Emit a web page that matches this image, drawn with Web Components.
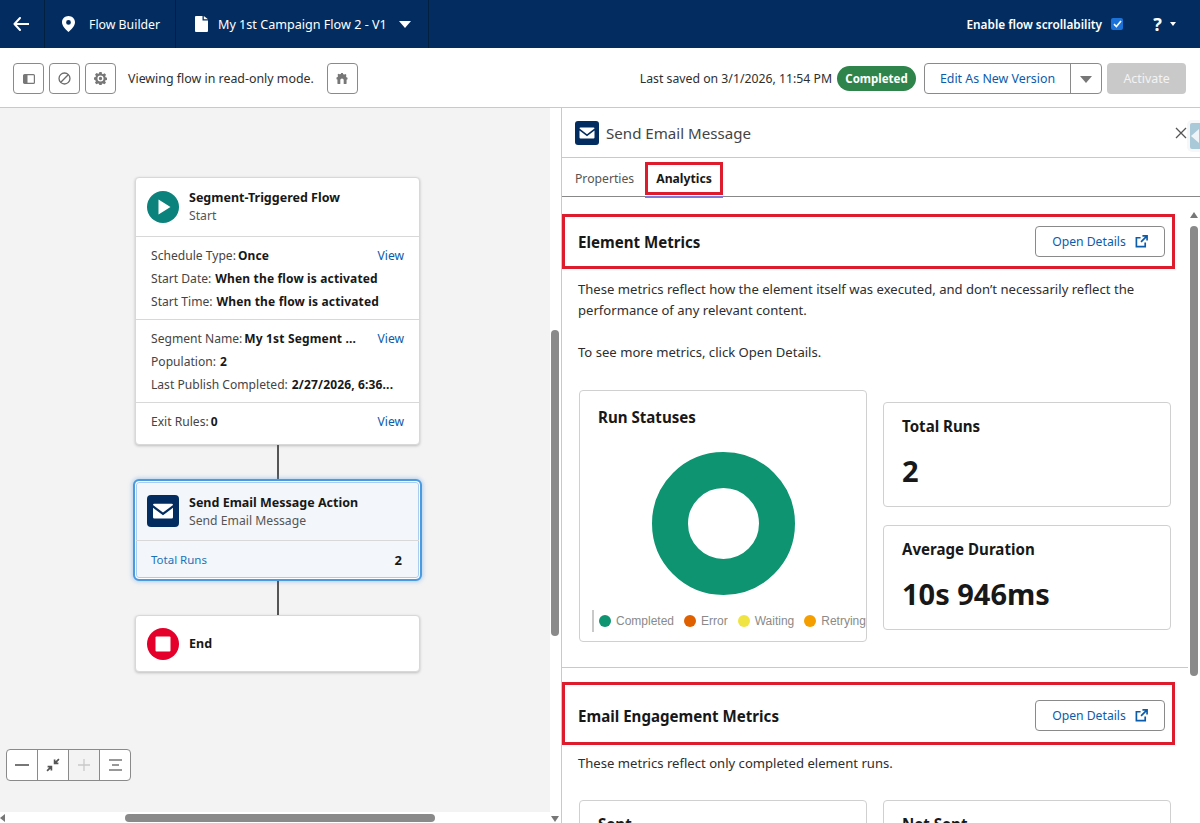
<!DOCTYPE html>
<html lang="en">
<head>
<meta charset="utf-8">
<title>Flow Builder</title>
<style>
  html, body { margin: 0; height: 100%; overflow: hidden; background: #fff; }
  body { font-family: "Noto Sans", "Open Sans", sans-serif; font-size: 13px; color: #181818; }
  #app { display: flex; flex-direction: column; width: 1200px; height: 823px; overflow: hidden; }
</style>
</head>
<body>
<div id="app">
  <flow-topbar></flow-topbar>
  <flow-toolbar></flow-toolbar>
  <flow-main>
    <flow-canvas slot="left">
      <flow-node kind="start" title="Segment-Triggered Flow" subtitle="Start">
        <node-section>
          <node-row label="Schedule Type:" value="Once" link="View" tight></node-row>
          <node-row label="Start Date:" value="When the flow is activated"></node-row>
          <node-row label="Start Time:" value="When the flow is activated"></node-row>
        </node-section>
        <node-section>
          <node-row label="Segment Name:" value="My 1st Segment ..." link="View" tight></node-row>
          <node-row label="Population:" value="2"></node-row>
          <node-row label="Last Publish Completed:" value="2/27/2026, 6:36..."></node-row>
        </node-section>
        <node-section>
          <node-row label="Exit Rules:" value="0" link="View" tight></node-row>
        </node-section>
      </flow-node>
      <flow-connector height="34"></flow-connector>
      <flow-node kind="email" title="Send Email Message Action" subtitle="Send Email Message" selected>
        <node-total label="Total Runs" value="2"></node-total>
      </flow-node>
      <flow-connector height="34"></flow-connector>
      <flow-node kind="end" title="End"></flow-node>
    </flow-canvas>
    <side-panel slot="right" title="Send Email Message">
      <section-head title="Element Metrics" height="55"></section-head>
      <p style="margin:10px 36px 0 16px;line-height:21px;font-size:13.1px;color:#2e2e2e">These metrics reflect how the element itself was executed, and don’t necessarily reflect the performance of any relevant content.<br><br>To see more metrics, click Open Details.</p>
      <metric-grid style="margin-top:27px">
        <status-card></status-card>
        <div style="display:flex;flex-direction:column;gap:18px;padding-top:12px">
          <metric-card title="Total Runs" value="2"></metric-card>
          <metric-card title="Average Duration" value="10s 946ms"></metric-card>
        </div>
      </metric-grid>
      <div style="height:1px;background:#c9c9c9;margin:25px 12px 0 0"></div>
      <div style="height:14px"></div>
      <section-head title="Email Engagement Metrics" height="63" shift="4"></section-head>
      <p style="margin:8px 36px 0 16px;line-height:21px;font-size:13.1px;color:#2e2e2e">These metrics reflect only completed element runs.</p>
      <metric-grid style="margin-top:26px">
        <metric-card title="Sent"></metric-card>
        <metric-card title="Net Sent"></metric-card>
      </metric-grid>
    </side-panel>
  </flow-main>
</div>

<script>
const FONT = '"Noto Sans", "Open Sans", sans-serif';

const ICONS = {
  back: '<svg width="16" height="14" viewBox="0 0 16 14"><path d="M7 1 1.500 7 7 13M2 7h13.500" fill="none" stroke="#fff" stroke-width="2" stroke-linecap="round" stroke-linejoin="round"/></svg>',
  pin: '<svg width="13" height="16" viewBox="0 0 13 16"><path fill-rule="evenodd" fill="#fff" d="M6.500 0C2.900 0 0 2.800 0 6.300 0 10.400 4.600 14.300 6.500 16 8.400 14.300 13 10.400 13 6.300 13 2.800 10.100 0 6.500 0Zm0 4a2.400 2.400 0 1 1 0 4.800 2.400 2.400 0 0 1 0-4.800Z"/></svg>',
  file: '<svg width="13" height="16" viewBox="0 0 13 16"><path fill="#fff" d="M1 0h6.500v4.500H13V15a1 1 0 0 1-1 1H1a1 1 0 0 1-1-1V1a1 1 0 0 1 1-1Zm7.800 0L13 3.300H8.800Z"/></svg>',
  panel: '<svg width="12" height="10" viewBox="0 0 12 10"><rect x=".6" y=".6" width="10.800" height="8.800" rx="1" fill="none" stroke="#777" stroke-width="1.200"/><rect x="1" y="1" width="3.500" height="8" fill="#777"/></svg>',
  block: '<svg width="13" height="13" viewBox="0 0 14 14"><circle cx="7" cy="7" r="5.900" fill="none" stroke="#6b6b6b" stroke-width="1.400"/><path d="M3 11 11 3" stroke="#6b6b6b" stroke-width="1.400"/></svg>',
  gear: '<svg width="13" height="13" viewBox="0 0 14 14"><path fill="#777" fill-rule="evenodd" d="M5.800 0h2.400l.4 1.800 1.100.5 1.600-1 1.700 1.700-1 1.600.5 1.100 1.500.4v2.400l-1.700.4-.4 1.100 1 1.600-1.700 1.700-1.600-1-1.100.4-.3 1.800H5.800l-.4-1.800-1.100-.4-1.600 1L1 11.700l1-1.600-.5-1.100L0 8.200V5.800l1.700-.4.400-1.100-1-1.600L2.800 1l1.600 1 1-.5ZM7 3.700a3.300 3.300 0 1 0 0 6.600 3.300 3.300 0 0 0 0-6.600Zm0 1.500a1.800 1.800 0 1 1 0 3.600 1.800 1.800 0 0 1 0-3.600Z"/></svg>',
  robot: '<svg width="12" height="11" viewBox="0 0 14 13"><path fill="#777" fill-rule="evenodd" d="M6 0h2l.4 1.400 1.500.4 1.200-.7 1.200 1.300-.6 1.200.5 1.400 1.300.5v2l-1.100.4V12a1 1 0 0 1-1 1H2.600a1 1 0 0 1-1-1V7.700L.5 7.300v-2l1.300-.5.500-1.400-.6-1.200 1.200-1.300 1.200.7 1.500-.4ZM5 8.400V13h4V8.400a2 2 0 0 0-4 0Z"/></svg>',
  external: '<svg width="13" height="13" viewBox="0 0 14 14"><path d="M6 3H1.500v9.500H11V8M8 1h5v5M13 1 6.500 7.500" fill="none" stroke="#0b5cab" stroke-width="1.800"/></svg>',
  mail: '<svg viewBox="0 0 24 24" width="100%" height="100%"><rect width="24" height="24" rx="3" fill="#032d60"/><path fill="#fff" d="M4.500 7.500a1 1 0 0 1 1-1h13a1 1 0 0 1 1 1L12 13.200Zm0 2.100 7.500 5.600 7.500-5.600v7a1 1 0 0 1-1 1h-13a1 1 0 0 1-1-1Z"/></svg>',
  start: '<svg viewBox="0 0 32 32" width="32" height="32"><circle cx="16" cy="16" r="16" fill="#0b827c"/><path d="M11.500 8.500 23.500 16l-12 7.500Z" fill="#fff"/></svg>',
  end: '<svg viewBox="0 0 32 32" width="32" height="32"><circle cx="16" cy="16" r="16" fill="#e4002b"/><rect x="8.500" y="8.500" width="15" height="15" rx="1" fill="#fff"/></svg>'
};

class FlowTopbar extends HTMLElement {
  constructor() {
    super();
    const shadow = this.attachShadow({ mode: 'open' });
    shadow.innerHTML = `
<style>
  :host { display: flex; align-items: stretch; height: 48px; flex: none; background: #032d60; color: #fff; font-family: ${FONT}; font-size: 12.3px; }
  .cell { display: flex; align-items: center; border-right: 1px solid #01203f; }
  .back { width: 45px; padding-left: 13px; box-sizing: border-box; }
  .app { width: 131px; padding-left: 17px; box-sizing: border-box; gap: 14px; }
  .doc { width: 253px; padding-left: 19px; box-sizing: border-box; gap: 10px; font-size: 12.6px; }
  .caret { width: 0; height: 0; border: 6px solid transparent; border-top: 7px solid #fff; border-bottom: 0; margin-left: 2px; }
  .right { margin-left: auto; display: flex; align-items: center; }
  .label { font-weight: 600; font-size: 11.8px; }
  .check { width: 12px; height: 12px; background: #1b72d8; border-radius: 2px; margin-left: 9px; display: flex; align-items: center; justify-content: center; }
  .help { font-size: 18px; font-weight: 700; margin-left: 29px; width: 11px; text-align: center; }
  .mini { width: 0; height: 0; border: 3px solid transparent; border-top: 4px solid #fff; border-bottom: 0; margin: 0 24px 0 7px; }
</style>
<div class="cell back">${ICONS.back}</div>
<div class="cell app">${ICONS.pin}<span>Flow Builder</span></div>
<div class="cell doc">${ICONS.file}<span>My 1st Campaign Flow 2 - V1</span><span class="caret"></span></div>
<div class="right">
  <span class="label">Enable flow scrollability</span>
  <span class="check"><svg width="9" height="8" viewBox="0 0 9 8"><path d="M1 4.200 3.400 6.500 8 1" fill="none" stroke="#fff" stroke-width="1.600"/></svg></span>
  <span class="help">?</span><span class="mini"></span>
</div>`;
  }
}
customElements.define('flow-topbar', FlowTopbar);

class IconButton extends HTMLElement {
  constructor() {
    super();
    const shadow = this.attachShadow({ mode: 'open' });
    shadow.innerHTML = `
<style>
  :host { display: flex; align-items: center; justify-content: center; width: 31px; height: 31px; box-sizing: border-box; border: 1px solid #8a8a8a; border-radius: 4px; background: #fff; flex: none; }
</style>
<slot></slot>`;
  }
}
customElements.define('icon-button', IconButton);

class FlowToolbar extends HTMLElement {
  constructor() {
    super();
    const shadow = this.attachShadow({ mode: 'open' });
    shadow.innerHTML = `
<style>
  :host { display: flex; align-items: center; height: 60px; flex: none; box-sizing: border-box; border-bottom: 1px solid #c9c9c9; padding: 2px 14px 0 13px; background: #fff; font-family: ${FONT}; font-size: 12.4px; color: #2e2e2e; }
  .tools { display: flex; gap: 5px; }
  .msg { margin: 0 13px 0 12px; }
  .right { margin-left: auto; display: flex; align-items: center; }
  .saved { font-size: 12.25px; }
  .badge { margin: 0 8px 0 5px; height: 25px; width: 79px; border-radius: 13px; background: #2e844a; color: #fff; font-weight: 700; font-size: 11.5px; display: flex; align-items: center; justify-content: center; }
  .split { display: flex; height: 31px; box-sizing: border-box; border: 1px solid #8a8a8a; border-radius: 4px; width: 178px; color: #0b5cab; }
  .split .main { width: 145px; display: flex; align-items: center; justify-content: center; border-right: 1px solid #8a8a8a; }
  .split .more { flex: 1; display: flex; align-items: center; justify-content: center; }
  .split .more i { width: 0; height: 0; border: 6px solid transparent; border-top: 7px solid #777; border-bottom: 0; margin-top: 2px; }
  .activate { margin-left: 5px; width: 79px; height: 31px; border-radius: 4px; background: #c9c9c9; color: #f3f3f3; display: flex; align-items: center; justify-content: center; }
</style>
<div class="tools">
  <icon-button>${ICONS.panel}</icon-button>
  <icon-button>${ICONS.block}</icon-button>
  <icon-button>${ICONS.gear}</icon-button>
</div>
<span class="msg">Viewing flow in read-only mode.</span>
<icon-button>${ICONS.robot}</icon-button>
<div class="right">
  <span class="saved">Last saved on 3/1/2026, 11:54 PM</span>
  <span class="badge">Completed</span>
  <div class="split"><span class="main">Edit As New Version</span><span class="more"><i></i></span></div>
  <span class="activate">Activate</span>
</div>`;
  }
}
customElements.define('flow-toolbar', FlowToolbar);

class FlowMain extends HTMLElement {
  constructor() {
    super();
    const shadow = this.attachShadow({ mode: 'open' });
    shadow.innerHTML = `
<style>
  :host { display: flex; flex: 1; min-height: 0; }
  ::slotted([slot="left"]) { width: 561px; flex: none; }
  ::slotted([slot="right"]) { flex: 1; min-width: 0; }
</style>
<slot name="left"></slot><slot name="right"></slot>`;
  }
}
customElements.define('flow-main', FlowMain);

class FlowCanvas extends HTMLElement {
  constructor() {
    super();
    const shadow = this.attachShadow({ mode: 'open' });
    shadow.innerHTML = `
<style>
  :host { display: block; position: relative; background: #fff; overflow: hidden; font-family: ${FONT}; }
  .stage { position: absolute; inset: 0 11px 11px 0; background: #f3f3f3; box-sizing: border-box; padding: 69px 0 0 135px; }
  .flow { width: 285px; display: flex; flex-direction: column; align-items: center; }
  .zoom { position: absolute; left: 6px; top: 641px; display: flex; width: 125px; height: 32px; box-sizing: border-box; border: 1px solid #8a8a8a; border-radius: 4px; background: #fff; overflow: hidden; }
  .zoom span { flex: 1; display: flex; align-items: center; justify-content: center; border-right: 1px solid #8a8a8a; }
  .zoom span:last-child { border-right: 0; }
  .zoom span.off { background: #f3f3f3; }
  .thumb { position: absolute; background: #8a8a8a; border-radius: 4px; }
  .v { left: 551px; top: 222px; width: 8px; height: 306px; }
  .h { left: 125px; top: 706px; width: 310px; height: 8px; }
  .arrow { position: absolute; width: 0; height: 0; border: 4px solid transparent; }
  .a-left { left: 0; top: 706px; border-right: 5px solid #777; border-left: 0; }
  .a-down { left: 551px; top: 708px; border-top: 6px solid #777; border-bottom: 0; }
</style>
<div class="stage"><div class="flow"><slot></slot></div></div>
<div class="zoom">
  <span><svg width="14" height="2"><rect width="14" height="2" fill="#777"/></svg></span>
  <span><svg width="14" height="14" viewBox="0 0 13 13"><path d="M12 1 8 5M8 1.500V5h3.500M1 12l4-4M5 11.500V8H1.500" fill="none" stroke="#555" stroke-width="1.600"/></svg></span>
  <span class="off"><svg width="12" height="12" viewBox="0 0 12 12"><path d="M6 0v12M0 6h12" stroke="#c9c9c9" stroke-width="1.300"/></svg></span>
  <span><svg width="13" height="12" viewBox="0 0 13 12"><path d="M0 1h13M3 6h7M0 11h13" stroke="#777" stroke-width="1.500"/></svg></span>
</div>
<div class="thumb v"></div>
<div class="thumb h"></div>
<div class="arrow a-left"></div>
<div class="arrow a-down"></div>`;
  }
}
customElements.define('flow-canvas', FlowCanvas);

class FlowConnector extends HTMLElement {
  constructor() {
    super();
    const shadow = this.attachShadow({ mode: 'open' });
    shadow.innerHTML = `<style>:host { display: block; width: 2px; background: #555; flex: none; }</style>`;
  }
  connectedCallback() {
    this.style.height = this.getAttribute('height') + 'px';
  }
}
customElements.define('flow-connector', FlowConnector);

class FlowNode extends HTMLElement {
  constructor() {
    super();
    const shadow = this.attachShadow({ mode: 'open' });
    const kind = this.getAttribute('kind');
    const sub = this.getAttribute('subtitle');
    const icon = kind === 'email' ? `<span class="mail">${ICONS.mail}</span>` : ICONS[kind];
    shadow.innerHTML = `
<style>
  :host { display: block; width: 285px; box-sizing: border-box; background: #fff; border: 1px solid #d8d8d8; border-radius: 4px; box-shadow: 0 1px 3px rgba(0,0,0,.22); color: #181818; font-family: ${FONT}; flex: none; }
  :host([selected]) { background: #f3f6fb; margin: 2px 0; outline: 2px solid #4a9ae0; outline-offset: 0; box-shadow: 0 0 4px 3px rgba(80,150,220,.4), inset 0 0 0 1px #a8cdee; border-color: #fff; }
  :host([selected]) .text { padding-top: 2px; }
  .head { display: flex; align-items: center; gap: 10px; height: 58px; padding-left: 11px; }
  :host([kind="end"]) .head { height: 55px; }
  .mail { width: 32px; height: 32px; display: block; }
  svg { display: block; flex: none; }
  .title { font-size: 12.5px; font-weight: 700; line-height: 18px; }
  .sub { font-size: 12.2px; line-height: 18px; color: #555; }
</style>
<div class="head">${icon}<div class="text"><div class="title">${this.getAttribute('title')}</div>${sub ? `<div class="sub">${sub}</div>` : ''}</div></div>
<slot></slot>`;
  }
}
customElements.define('flow-node', FlowNode);

class NodeSection extends HTMLElement {
  constructor() {
    super();
    const shadow = this.attachShadow({ mode: 'open' });
    shadow.innerHTML = `
<style>
  :host { display: flex; flex-direction: column; gap: 5px; padding: 10px 15px 8px; border-top: 1px solid #d8d8d8; }
  :host(:last-child) { padding-bottom: 13px; }
</style>
<slot></slot>`;
  }
}
customElements.define('node-section', NodeSection);

class NodeRow extends HTMLElement {
  constructor() {
    super();
    const shadow = this.attachShadow({ mode: 'open' });
    const link = this.getAttribute('link');
    const gap = this.hasAttribute('tight') ? '2px' : '4px';
    shadow.innerHTML = `
<style>
  :host { display: flex; height: 18px; line-height: 18px; font-size: 12.1px; color: #444; white-space: nowrap; }
  b { color: #181818; margin-left: ${gap}; font-weight: 700; font-size: 12px; letter-spacing: .15px; }
  a { margin-left: auto; color: #0b5cab; }
</style>
<span>${this.getAttribute('label')}</span><b>${this.getAttribute('value')}</b>${link ? `<a>${link}</a>` : ''}`;
  }
}
customElements.define('node-row', NodeRow);

class NodeTotal extends HTMLElement {
  constructor() {
    super();
    const shadow = this.attachShadow({ mode: 'open' });
    shadow.innerHTML = `
<style>
  :host { display: flex; align-items: center; justify-content: space-between; height: 37px; border-top: 1px solid #d8d8d8; padding: 0 17px 0 15px; }
  span { font-size: 11.5px; color: #1b72b8; }
  b { font-size: 13px; color: #181818; }
</style>
<span>${this.getAttribute('label')}</span><b>${this.getAttribute('value')}</b>`;
  }
}
customElements.define('node-total', NodeTotal);

class SidePanel extends HTMLElement {
  constructor() {
    super();
    const shadow = this.attachShadow({ mode: 'open' });
    shadow.innerHTML = `
<style>
  :host { display: flex; flex-direction: column; position: relative; box-sizing: border-box; border-left: 1px solid #c9c9c9; background: #fff; overflow: hidden; font-family: ${FONT}; }
  header { display: flex; align-items: center; flex: none; height: 50px; box-sizing: border-box; border-bottom: 1px solid #c9c9c9; padding: 0 0 0 13px; gap: 7px; font-size: 15.1px; color: #444; }
  .icon { width: 24px; height: 24px; }
  .tabs { display: flex; flex: none; height: 39px; box-sizing: border-box; border-bottom: 1px solid #888; padding-left: 13px; font-size: 12.2px; }
  .tab { display: flex; align-items: center; color: #555; width: 70px; padding-top: 2px; box-sizing: border-box; }
  .active { position: relative; width: 78px; justify-content: center; box-sizing: border-box; height: 33px; margin-top: 4px; padding-top: 0; border: 3px solid #dd1c2e; font-weight: 700; color: #181818; }
  .active::after { content: ""; position: absolute; left: -3px; right: -3px; bottom: -6px; height: 2px; background: #7b7bdb; }
  .body { flex: 1; min-height: 0; overflow: hidden; padding-top: 17px; }
  .close { position: absolute; left: 613px; top: 19px; width: 12px; height: 12px; }
  .tab-peek { position: absolute; left: 625px; top: 12px; width: 20px; height: 32px; background: #a9c8d8; border: 3px solid #f6f7f8; border-radius: 5px; box-sizing: border-box; overflow: hidden; }
  .tab-peek::after { content: ""; position: absolute; left: 1px; top: 6px; width: 0; height: 0; border: 7px solid transparent; border-right: 8px solid #eef4f7; border-left: 0; }
  .up { width: 0; height: 0; border: 4px solid transparent; border-bottom: 6px solid #777; border-top: 0; position: absolute; left: 628px; top: 104px; }
  .thumb { position: absolute; left: 628px; top: 118px; width: 8px; height: 450px; background: #8a8a8a; border-radius: 4px; }
</style>
<header><span class="icon">${ICONS.mail}</span><span>${this.getAttribute('title')}</span></header>
<div class="tabs"><span class="tab">Properties</span><span class="tab active">Analytics</span></div>
<div class="body"><slot></slot></div>
<svg class="close" viewBox="0 0 12 12"><path d="M1 1l10 10M11 1 1 11" stroke="#555" stroke-width="1.300"/></svg>
<div class="tab-peek"></div>
<div class="up"></div>
<div class="thumb"></div>`;
  }
}
customElements.define('side-panel', SidePanel);

class SectionHead extends HTMLElement {
  constructor() {
    super();
    const shadow = this.attachShadow({ mode: 'open' });
    shadow.innerHTML = `
<style>
  :host { display: flex; align-items: center; justify-content: space-between; box-sizing: border-box; width: 613px; border: 3px solid #dd1c2e; padding: 0 7px 0 13px; }
  h2 { margin: 0; font-size: 15.1px; font-weight: 700; color: #181818; }
  .btn { display: flex; align-items: center; justify-content: center; gap: 9px; width: 130px; height: 31px; box-sizing: border-box; border: 1px solid #8a8a8a; border-radius: 4px; color: #0b5cab; font-size: 12.2px; background: #fff; }
  svg { display: block; }
</style>
<h2>${this.getAttribute('title')}</h2>
<span class="btn">Open Details ${ICONS.external}</span>`;
  }
  connectedCallback() {
    this.style.height = this.getAttribute('height') + 'px';
    if (this.hasAttribute('shift')) this.style.paddingTop = this.getAttribute('shift') + 'px';
  }
}
customElements.define('section-head', SectionHead);

class MetricGrid extends HTMLElement {
  constructor() {
    super();
    const shadow = this.attachShadow({ mode: 'open' });
    shadow.innerHTML = `
<style>
  :host { display: grid; grid-template-columns: 288px 288px; column-gap: 16px; margin-left: 17px; align-items: start; }
</style>
<slot></slot>`;
  }
}
customElements.define('metric-grid', MetricGrid);

class MetricCard extends HTMLElement {
  constructor() {
    super();
    const shadow = this.attachShadow({ mode: 'open' });
    const value = this.getAttribute('value');
    shadow.innerHTML = `
<style>
  :host { display: block; box-sizing: border-box; height: 105px; border: 1px solid #d0d0d0; border-radius: 4px; padding: 11px 18px; background: #fff; color: #181818; }
  .t { font-size: 15.1px; font-weight: 700; line-height: 24px; }
  .v { font-size: 29px; font-weight: 700; line-height: 40px; margin-top: 13px; }
</style>
<div class="t">${this.getAttribute('title')}</div>
${value ? `<div class="v">${value}</div>` : ''}`;
  }
}
customElements.define('metric-card', MetricCard);

class StatusCard extends HTMLElement {
  constructor() {
    super();
    const shadow = this.attachShadow({ mode: 'open' });
    const items = [['Completed', '#0e9470'], ['Error', '#e06000'], ['Waiting', '#f0e442'], ['Retrying', '#f59e00']];
    shadow.innerHTML = `
<style>
  :host { display: block; box-sizing: border-box; height: 252px; border: 1px solid #d0d0d0; border-radius: 4px; background: #fff; color: #181818; overflow: hidden; }
  .t { font-size: 15.1px; font-weight: 700; line-height: 24px; margin: 14px 0 0 18px; }
  svg { display: block; margin: 23px 0 0 72px; }
  .legend { display: flex; align-items: center; height: 22px; margin: 15px 0 0 12px; padding-left: 5px; gap: 10px; border-left: 2px solid #c9c9c9; font-family: "Liberation Sans", Arial, sans-serif; font-size: 12px; color: #8a8a8a; white-space: nowrap; }
  .legend span { display: flex; align-items: center; gap: 5px; }
  .legend i { width: 12px; height: 12px; border-radius: 50%; display: block; }
</style>
<div class="t">Run Statuses</div>
<svg width="143" height="143" viewBox="0 0 143 143"><circle cx="71.500" cy="71.500" r="53.500" fill="none" stroke="#0e9470" stroke-width="36"/></svg>
<div class="legend">${items.map(i => `<span><i style="background:${i[1]}"></i>${i[0]}</span>`).join('')}</div>`;
  }
}
customElements.define('status-card', StatusCard);
</script>
</body>
</html>
